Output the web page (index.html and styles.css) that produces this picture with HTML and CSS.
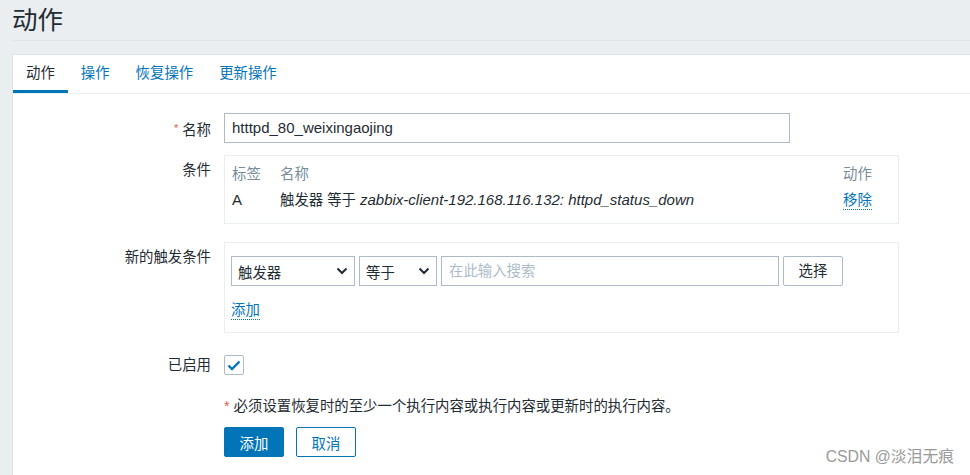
FILE: index.html
```html
<!DOCTYPE html>
<html lang="zh">
<head>
<meta charset="utf-8">
<title>动作</title>
<link rel="stylesheet" href="styles.css">
</head>
<body>
<div class="page">
<header class="page-header">
  <h1 class="page-title">动作</h1>
</header>
<main class="panel">
  <nav class="tabs">
    <span class="tab tab-active">动作</span>
    <span class="tab">操作</span>
    <span class="tab">恢复操作</span>
    <span class="tab">更新操作</span>
  </nav>
  <div class="form">
    <div class="row row-name">
      <div class="label"><span class="req">*</span> 名称</div>
      <div class="field"><div class="input input-name"><span class="en">htttpd_80_weixingaojing</span></div></div>
    </div>
    <div class="row row-cond">
      <div class="label">条件</div>
      <div class="field">
        <div class="box cond-box">
          <div class="cond-grid">
            <div class="th">标签</div>
            <div class="th">名称</div>
            <div class="th">动作</div>
            <div class="td"><span class="en">A</span></div>
            <div class="td">触发器 等于 <em class="en">zabbix-client-192.168.116.132: httpd_status_down</em></div>
            <div class="td"><span class="link">移除</span></div>
          </div>
        </div>
      </div>
    </div>
    <div class="row row-new">
      <div class="label">新的触发条件</div>
      <div class="field">
        <div class="box new-box">
          <div class="controls">
            <div class="select sel-1"><span>触发器</span><svg class="chev" width="12" height="8" viewBox="0 0 12 8"><polyline points="1.5,1.5 6,6 10.5,1.5" fill="none" stroke="#1f2c33" stroke-width="2"/></svg></div>
            <div class="select sel-2"><span>等于</span><svg class="chev" width="12" height="8" viewBox="0 0 12 8"><polyline points="1.5,1.5 6,6 10.5,1.5" fill="none" stroke="#1f2c33" stroke-width="2"/></svg></div>
            <div class="input input-search">在此输入搜索</div>
            <div class="btn-alt">选择</div>
          </div>
          <div class="add-line"><span class="link">添加</span></div>
        </div>
      </div>
    </div>
    <div class="row row-enabled">
      <div class="label">已启用</div>
      <div class="field">
        <div class="checkbox"><svg width="14" height="11" viewBox="0 0 14 11"><polyline points="1.5,5.5 5,9 12.5,1.5" fill="none" stroke="#0275b8" stroke-width="2.4"/></svg></div>
      </div>
    </div>
    <div class="row row-note">
      <div class="label"></div>
      <div class="field note"><span class="req-big">*</span> 必须设置恢复时的至少一个执行内容或执行内容或更新时的执行内容。</div>
    </div>
    <div class="row row-buttons">
      <div class="label"></div>
      <div class="field buttons">
        <button class="btn btn-primary">添加</button>
        <button class="btn btn-secondary">取消</button>
      </div>
    </div>
  </div>
</main>
<div class="watermark">CSDN @淡泪无痕</div>
</div>
</body>
</html>
```
FILE: styles.css
```css
* { box-sizing: border-box; }
html, body { margin: 0; padding: 0; background: #ebeef0; }
body {
  font-family: "Liberation Sans", Arial, "Noto Sans CJK SC", sans-serif;
  font-size: 14.4px;
  color: #1f2c33;
}
.page {
  width: 970px;
  height: 475px;
  overflow: hidden;
  position: relative;
}
.en { font-size: 15px; }
.page-header {
  margin-left: 12px;
  height: 41px;
  padding-top: 2px;
  border-bottom: 1px solid #dfe4e7;
}
.page-title {
  margin: 0;
  font-weight: normal;
  font-size: 25.5px;
  line-height: 36px;
  height: 36px;
  color: #1f2c33;
}
.panel {
  margin: 13px 0 0 12px;
  background: #fff;
  border: 1px solid #dfe4e7;
  border-right: none;
  border-bottom: none;
  height: 421px;
  overflow: hidden;
}
.tabs {
  display: flex;
  height: 39px;
  border-bottom: 1px solid #ebeef0;
}
.tab {
  padding: 0 13px;
  line-height: 36px;
  height: 38px;
  color: #0275b8;
  border-bottom: 3px solid transparent;
}
.tab-active {
  color: #1f2c33;
  border-bottom-color: #0275b8;
}
.form { padding-top: 19px; }
.row { display: flex; align-items: flex-start; }
.label {
  width: 211px;
  height: 30px;
  flex: none;
  padding-right: 13px;
  text-align: right;
  line-height: 30px;
}
.field { flex: none; }
.req {
  color: #e45959;
  font-size: 11px;
  vertical-align: 3px;
}
.req-big { color: #e45959; }
.input {
  height: 30px;
  border: 1px solid #acbbc7;
  background: #fff;
  line-height: 28px;
  padding: 0 7px;
  overflow: hidden;
}
.input-name { width: 566px; }
.row-name { margin-bottom: 12px; }
.box {
  width: 675px;
  border: 1px solid #ebeef0;
}
.cond-box { padding: 6px 0 9px 7px; height: 69px; }
.cond-grid {
  display: grid;
  grid-template-columns: 48px 1fr 55px;
  grid-template-rows: 24px 28px;
}
.th { color: #768d99; line-height: 24px; height: 24px; }
.td { line-height: 28px; height: 28px; white-space: nowrap; }
.td em { font-style: italic; }
.link {
  color: #0275b8;
  border-bottom: 1px dotted #0275b8;
  line-height: 18px;
  display: inline-block;
}
.row-cond { margin-bottom: 18px; }
.new-box { padding: 13px 0 10px 6px; height: 91px; }
.controls { display: flex; gap: 4px; align-items: center; height: 30px; }
.select {
  height: 30px;
  border: 1px solid #acbbc7;
  display: flex;
  align-items: center;
  justify-content: space-between;
  padding: 0 6px;
}
.sel-1 { width: 124px; }
.sel-2 { width: 78px; }
.chev { flex: none; }
.input-search { width: 338px; color: #acbbc7; }
.btn-alt {
  width: 60px;
  height: 30px;
  border: 1px solid #acbbc7;
  border-radius: 2px;
  text-align: center;
  line-height: 28px;
}
.add-line { margin-top: 12px; line-height: 24px; height: 24px; }
.row-new { margin-bottom: 17px; }
.checkbox {
  margin-top: 5px;
  width: 20px;
  height: 20px;
  border: 1px solid #acbbc7;
  border-radius: 2px;
  display: flex;
  align-items: center;
  justify-content: center;
}
.row-enabled { margin-bottom: 11px; }
.note { line-height: 30px; height: 30px; }
.row-note { margin-bottom: 6px; }
.buttons { display: flex; gap: 12px; }
.btn {
  width: 60px;
  height: 30px;
  font: inherit;
  border-radius: 2px;
  padding: 0;
  cursor: pointer;
}
.btn-primary {
  background: #0275b8;
  border: 1px solid #0275b8;
  color: #fff;
}
.btn-secondary {
  background: #fff;
  border: 1px solid #0275b8;
  color: #0275b8;
}
.watermark {
  position: absolute;
  right: 16px;
  top: 446px;
  font-size: 15.8px;
  line-height: 22px;
  white-space: nowrap;
  color: #9a9a9a;
  text-shadow: 0 0 1px #fff;
}
```
